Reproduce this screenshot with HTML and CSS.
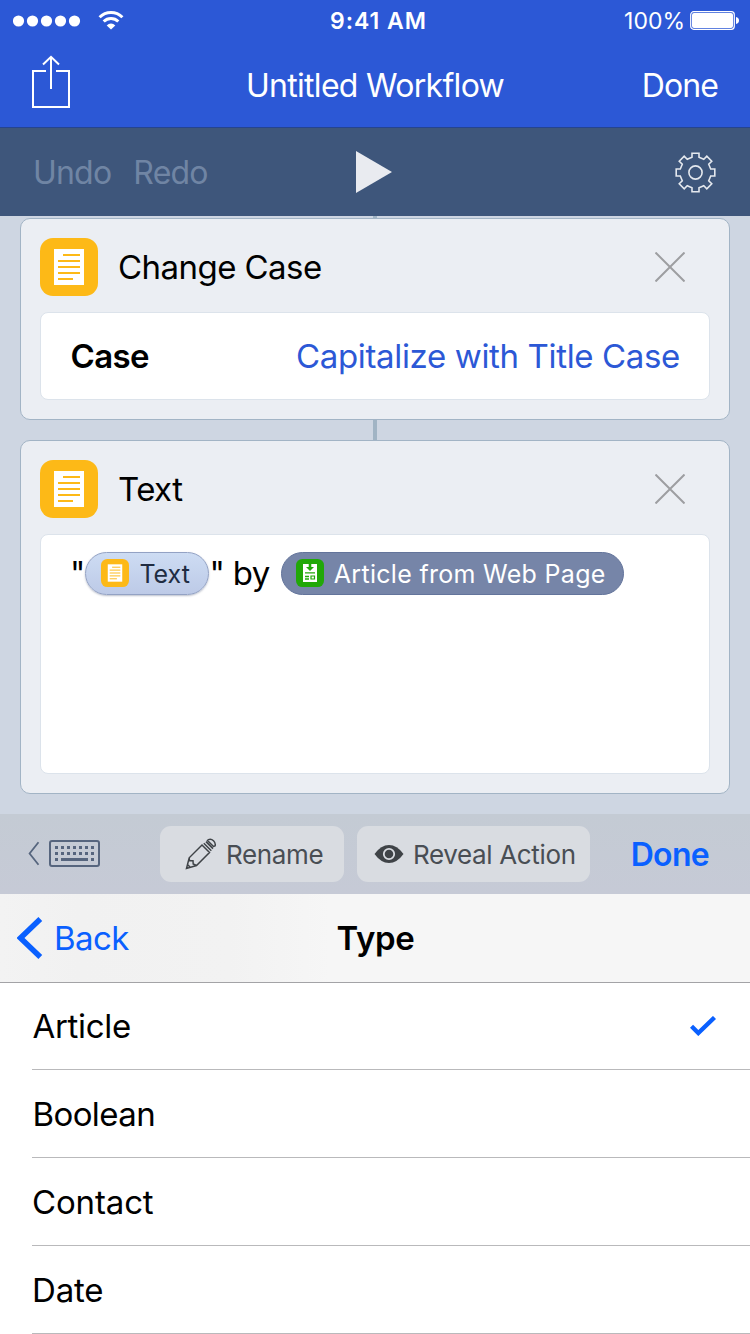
FILE: index.html
```html
<!DOCTYPE html>
<html lang="en">
<head>
<meta charset="utf-8">
<title>Untitled Workflow</title>
<link rel="stylesheet" href="styles.css">
</head>
<body>
<svg width="0" height="0" class="defs" aria-hidden="true">
  <symbol id="doc" viewBox="0 0 58 58">
    <rect width="58" height="58" rx="13" fill="#fdb917"/>
    <path d="M14 11h30v36H14z" fill="#fff"/>
    <path d="M23 17h17M18 23h22M18 29h22M18 35h22M18 41h15" stroke="#fdb917" stroke-width="2"/>
  </symbol>
  <symbol id="close" viewBox="0 0 30 30">
    <path d="M.5.5l29 29M29.5.5l-29 29" stroke="#9d9ea1" stroke-width="2"/>
  </symbol>
</svg>
<div class="screen">
  <header class="header">
    <div class="status">
      <div class="status-left">
        <svg width="68" height="12" viewBox="0 0 68 12" fill="#fff"><circle cx="5.5" cy="6" r="5.6"/><circle cx="19.5" cy="6" r="5.6"/><circle cx="33.5" cy="6" r="5.6"/><circle cx="47.5" cy="6" r="5.6"/><circle cx="61.5" cy="6" r="5.6"/></svg>
        <svg width="26" height="19" viewBox="0 0 26 19" fill="none" stroke="#fff" stroke-width="3"><path d="M1.6 6.3a16.2 16.2 0 0 1 22.8 0"/><path d="M5.7 10.5a10.3 10.3 0 0 1 14.6 0"/><path d="M8.7 14.4a6 6 0 0 1 8.6 0L13 18.6z" fill="#fff" stroke="none"/></svg>
      </div>
      <div class="clock">9:41 AM</div>
      <div class="status-right">
        <span class="percent">100%</span>
        <svg width="49" height="19" viewBox="0 0 49 19"><rect x=".7" y=".7" width="43.6" height="17.6" rx="3" fill="none" stroke="#fff" stroke-width="1.2"/><rect x="2" y="2" width="41" height="15" rx="2" fill="#fff"/><path d="M46 6q3 .8 3 3.5T46 13z" fill="#fff"/></svg>
      </div>
    </div>
    <div class="navbar">
      <svg class="share" width="40" height="54" viewBox="0 0 40 54" fill="none" stroke="#fff" stroke-width="2"><path d="M15 16H2v36h36V16H25M20 34V2M12 9.5L20 1.8l8 7.7"/></svg>
      <h1 class="nav-title">Untitled Workflow</h1>
      <span class="nav-done">Done</span>
    </div>
  </header>
  <div class="toolbar">
    <div class="history"><span>Undo</span><span>Redo</span></div>
    <svg class="play" width="36" height="42" viewBox="0 0 36 42"><path d="M0 0l36 21L0 42z" fill="#e9ebf0"/></svg>
    <svg class="gear" width="42" height="42" viewBox="-21.5 -21.5 42 42" fill="none" stroke="#e4e8ee" stroke-width="1.6"><path d="M-3.5-15.2V-19.3H3.5V-15.2L8.27-13.22 11.3-16.26 16.26-11.3 13.22-8.27 15.2-3.5H19.3V3.5H15.2L13.22 8.27 16.26 11.3 11.3 16.26 8.27 13.22 3.5 15.2V19.3H-3.5V15.2L-8.27 13.22-11.3 16.26-16.26 11.3-13.22 8.27-15.2 3.5H-19.3V-3.5H-15.2L-13.22-8.27-16.26-11.3-11.3-16.26-8.27-13.22Z"/><circle r="6.6"/></svg>
  </div>
  <main class="canvas">
    <div class="link link-top"></div>
    <section class="card">
      <div class="card-head">
        <svg class="card-icon"><use href="#doc"/></svg>
        <h2 class="card-title">Change Case</h2>
        <svg class="card-close"><use href="#close"/></svg>
      </div>
      <div class="field">
        <span class="field-label">Case</span>
        <span class="field-value">Capitalize with Title Case</span>
      </div>
    </section>
    <div class="link"></div>
    <section class="card">
      <div class="card-head">
        <svg class="card-icon"><use href="#doc"/></svg>
        <h2 class="card-title">Text</h2>
        <svg class="card-close"><use href="#close"/></svg>
      </div>
      <div class="editor">
        <div class="line">
          <span class="quote">"</span>
          <span class="token">
            <svg class="token-icon"><use href="#doc"/></svg>
            <span class="token-text">Text</span>
          </span>
          <span class="by">" by</span>
          <span class="token token-dark">
            <svg class="token-icon" viewBox="0 0 28 28"><rect width="28" height="28" rx="6.3" fill="#21a808"/><path d="M7 5h14v18H7z" fill="#fff"/><path d="M14 4v5M9 13.9h10M9 17.5h4M9 20h4" stroke="#21a808" stroke-width="1.3"/><path d="M12.7 4h2.6v4H18l-4 4-4-4h2.7z" fill="#21a808"/><path d="M15 17h3.5v3H15z" fill="none" stroke="#21a808" stroke-width="1.2"/></svg>
            <span class="token-text">Article from Web Page</span>
          </span>
        </div>
      </div>
    </section>
  </main>
  <div class="accessory">
    <svg class="keyboard" width="72" height="28" viewBox="0 0 72 28" fill="none" stroke="#56657e"><path d="M10.5 2.300L1.600 13.500l8.900 11.200" stroke-width="1.800"/><rect x="22" y="1" width="49" height="25" rx="2" stroke-width="2"/><path d="M27 7.500h40M27 13.500h40" stroke-width="3" stroke-dasharray="3 3"/><path d="M27 19.500h3M33 19.500h27M63 19.500h3" stroke-width="3"/></svg>
    <div class="pill rename">
      <svg width="32" height="32" viewBox="0 0 32 32" fill="none" stroke="#3f4347" stroke-width="1.500"><path d="M1.500 30.500L4.200 19.800 17 7 24.500 14.500 11.500 27.500zM4.200 19.800L4.500 22.800H8L8.200 26 11.500 27.500M2.500 26.500L5.500 29.500M18.800 5.300L26.300 12.800M21 3.600L28 10.600M23.500 1.600Q26 .3 28.500 2.800T30 8L28.500 8.500 22.500 2.500z"/></svg>
      <span>Rename</span>
    </div>
    <div class="pill reveal">
      <svg width="30" height="20" viewBox="0 0 30 20"><path d="M.5 10Q7 1 15 1t14.500 9Q23 19 15 19T.5 10z" fill="#3f4347"/><circle cx="15" cy="10" r="5.200" fill="#3f4347" stroke="#d9dce1" stroke-width="1.800"/></svg>
      <span>Reveal Action</span>
    </div>
    <span class="accessory-done">Done</span>
  </div>
  <nav class="picker-nav">
    <div class="back">
      <svg width="26" height="42" viewBox="0 0 26 42"><path d="M23.300 2L3.500 21l19.800 19" fill="none" stroke="#0a60ff" stroke-width="5.500"/></svg>
      <span>Back</span>
    </div>
    <h2 class="picker-title">Type</h2>
    <span></span>
  </nav>
  <ul class="list">
    <li class="row"><span class="article">Article</span><svg width="26" height="20" viewBox="0 0 26 20"><path d="M1.500 10.200l6.800 6.800L24.500 1.500" fill="none" stroke="#0a60ff" stroke-width="4.400"/></svg></li>
    <li class="row"><span class="boolean">Boolean</span></li>
    <li class="row"><span>Contact</span></li>
    <li class="row"><span>Date</span></li>
  </ul>
</div>
</body>
</html>
```
FILE: styles.css
```css
* { box-sizing: border-box; }
body { margin: 0; font-family: Inter, "Liberation Sans", sans-serif; font-size: 33px; color: #000; }
h1, h2, ul { margin: 0; padding: 0; font-size: inherit; font-weight: 400; list-style: none; }
svg { display: block; flex: none; }
span, h1, h2 { white-space: nowrap; }
.defs { position: absolute; }
.screen { width: 750px; height: 1334px; overflow: hidden; display: flex; flex-direction: column; background: #fff; }

.header { height: 128px; flex: none; background: #2c58d6; border-bottom: 1px solid #25448f; color: #fff; }
.status { height: 40px; padding: 1px 11px 0 13px; display: grid; grid-template-columns: 1fr auto 1fr; align-items: center; }
.status-left { display: flex; align-items: center; gap: 17px; }
.clock { font-size: 23px; font-weight: 600; letter-spacing: 0.95px; padding-left: 5px; }
.status-right { display: flex; align-items: center; justify-content: flex-end; gap: 5px; }
.percent { font-size: 23px; }
.navbar { height: 88px; padding: 2px 32px 0 31px; display: grid; grid-template-columns: 1fr auto 1fr; align-items: center; font-size: 32px; }
.share { margin-top: -7px; }
.nav-title { letter-spacing: -0.7px; padding-left: 1px; }
.nav-done { justify-self: end; letter-spacing: -0.9px; }

.toolbar { height: 88px; flex: none; padding: 0 34px; display: grid; grid-template-columns: 1fr 36px 1fr; align-items: center; background: #3e567b; }
.history { display: flex; gap: 22px; margin-left: -1px; font-size: 32px; letter-spacing: -0.8px; color: #7085a4; }
.play { margin-left: -1px; }
.gear { justify-self: end; }

.canvas { height: 598px; flex: none; padding: 0 20px; background: #ced6e2; }
.link { width: 4px; height: 20px; margin: 0 auto; background: #a1b4c4; }
.link-top { height: 2px; }
.card { border: 1px solid #a2b4c5; border-radius: 10px; padding: 19px; background: #ebeef3; }
.card-head { height: 58px; display: flex; align-items: center; padding-right: 25px; }
.card-icon { width: 58px; height: 58px; }
.card-title { flex: 1; margin-left: 20px; letter-spacing: -0.55px; }
.card-close { width: 30px; height: 30px; }
.field { height: 88px; margin-top: 16px; padding: 0 29px; border: 1px solid #dce3eb; border-radius: 8px; background: #fff; display: flex; align-items: center; justify-content: space-between; }
.field-label { font-weight: 600; letter-spacing: -0.6px; padding-left: 0.5px; }
.field-value { color: #2c58d6; letter-spacing: -0.35px; }
.editor { height: 240px; margin-top: 16px; padding: 16px 29px; border: 1px solid #dce3eb; border-radius: 8px; background: #fff; }
.line { display: flex; align-items: center; height: 44px; }
.by { margin-left: 0; letter-spacing: -0.6px; }
.token { height: 43px; width: 124px; padding-left: 15px; border: 1px solid #93a2c4; border-radius: 22px; background: linear-gradient(#cddcf3, #bdcae7); box-shadow: 0 1px 2px rgba(60, 75, 110, .35); display: flex; align-items: center; gap: 10px; font-size: 25px; color: #202c42; }
.token-text { padding-top: 1px; }
.token-dark { width: 343px; margin-left: 11px; padding-left: 14px; background: #7685a8; border-color: #63749b; box-shadow: none; color: #fff; letter-spacing: 0.3px; }
.token-icon { width: 28px; height: 28px; }

.accessory { height: 80px; flex: none; display: flex; align-items: center; padding: 0 41px 0 28px; background: linear-gradient(#c4cbd4, #c6cad6); }
.pill { height: 56px; border-radius: 11px; background: #d9dce1; display: flex; align-items: center; color: #494e54; font-size: 26px; }
.rename { width: 184px; margin-left: 60px; padding-left: 25px; gap: 9px; letter-spacing: -0.35px; }
.reveal { width: 233px; margin-left: 13px; padding-left: 17px; gap: 9px; letter-spacing: -0.35px; }
.accessory-done { margin-left: auto; font-size: 32px; font-weight: 600; letter-spacing: -0.7px; color: #0a60ff; }

.picker-nav { height: 89px; flex: none; padding: 0 17px; display: grid; grid-template-columns: 1fr auto 1fr; align-items: center; border-bottom: 1px solid #a3a3a6; background: linear-gradient(90deg, #f3f3f3 0, #f1f1f1 80px, #f2f2f2 230px, #f6f6f6 330px, #f6f6f6); }
.back { display: flex; align-items: center; gap: 11px; color: #0a60ff; letter-spacing: -0.6px; }
.picker-title { font-weight: 600; padding-left: 1px; letter-spacing: -0.3px; }

.list { padding-left: 32px; }
.row { height: 88px; padding-right: 34px; display: flex; align-items: center; justify-content: space-between; border-bottom: 1px solid #b9b9bb; letter-spacing: -0.15px; }
.row:first-child { height: 87px; }
.article { letter-spacing: -0.3px; padding-left: 0.5px; }
.boolean { letter-spacing: -0.6px; padding-left: 0.5px; }
```
